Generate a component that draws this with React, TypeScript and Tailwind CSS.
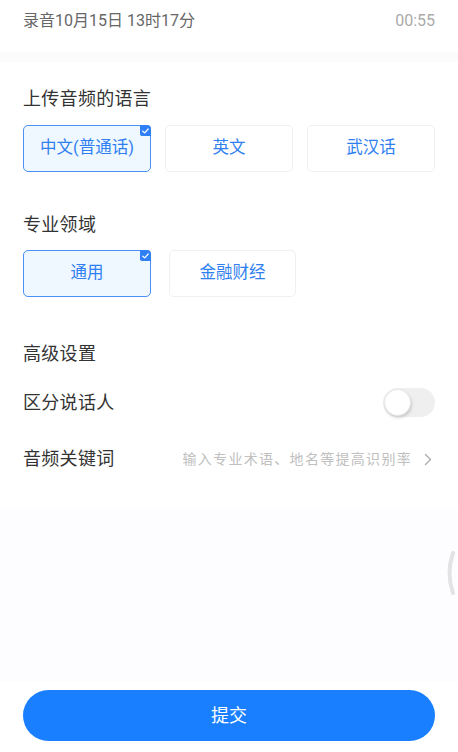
import React from "react";

const Check = () => (
  <span className="absolute -top-px -right-px flex h-[11px] w-[11px] items-center justify-center rounded-tr-[4px] rounded-bl-[2px] bg-[#2f80f6]">
    <svg width="7" height="6" viewBox="0 0 7 6" fill="none">
      <path d="M0.8 3.2 L2.7 4.9 L6.2 1" stroke="white" strokeWidth="1.2" strokeLinecap="round" strokeLinejoin="round" />
    </svg>
  </span>
);

const Chip = ({ label, selected, w }: { label: string; selected?: boolean; w: string }) => (
  <div
    className={
      "relative flex h-[47px] items-center justify-center rounded-[5px] text-[16.5px] text-[#2f7ff0] " +
      w +
      (selected ? " border-[1.5px] border-[#4a90f5] bg-[#eff7ff]" : " border border-[#f0f0f3] bg-white")
    }
  >
    {label}
    {selected && <Check />}
  </div>
);

export default function App() {
  return (
    <div
      className="relative flex h-[752px] w-[458px] flex-col overflow-hidden bg-white"
      style={{ fontFamily: 'Roboto, "Noto Sans CJK SC", sans-serif' }}
    >
      <div className="flex h-[52px] items-start justify-between px-[23px] pt-[9px]">
        <span className="text-[16px] text-[#666]">录音10月15日 13时17分</span>
        <span className="text-[16px] text-[#aaa]">00:55</span>
      </div>
      <div className="h-[10px] bg-[#fbfbfb]" />
      <div className="flex flex-col px-[23px]">
        <div className="mt-[24px] text-[18px] leading-[26px] tracking-[0.3px] text-[#333]">上传音频的语言</div>
        <div className="mt-[13px] flex gap-[14px]">
          <Chip label="中文(普通话)" selected w="w-[128px]" />
          <Chip label="英文" w="w-[128px]" />
          <Chip label="武汉话" w="w-[128px]" />
        </div>
        <div className="mt-[40px] text-[18px] leading-[26px] tracking-[0.3px] text-[#333]">专业领域</div>
        <div className="mt-[12px] flex gap-[18px]">
          <Chip label="通用" selected w="w-[128px]" />
          <Chip label="金融财经" w="w-[127px]" />
        </div>
        <div className="mt-[44px] text-[18px] leading-[26px] tracking-[0.3px] text-[#333]">高级设置</div>
        <div className="mt-[21px] flex items-center justify-between">
          <span className="text-[18px] leading-[26px] tracking-[0.3px] text-[#333]">区分说话人</span>
          <div className="relative h-[29px] w-[52px] rounded-full bg-[#efefef]">
            <div className="absolute left-[1px] top-[1px] h-[27px] w-[27px] rounded-full border border-[#e8e8e8] bg-white shadow-[1px_2px_3px_rgba(0,0,0,0.15)]" />
          </div>
        </div>
        <div className="mt-[29px] flex items-center justify-between">
          <span className="text-[18px] leading-[26px] tracking-[0.3px] text-[#333]">音频关键词</span>
          <div className="flex items-center gap-[12px] pr-[3px]">
            <span className="text-[14px] tracking-[1.3px] text-[#c0c0c0]">输入专业术语、地名等提高识别率</span>
            <svg width="8" height="13" viewBox="0 0 8 13" fill="none">
              <path d="M1.5 1.5 L6.5 6.5 L1.5 11.5" stroke="#aaa" strokeWidth="1.3" strokeLinecap="round" strokeLinejoin="round" />
            </svg>
          </div>
        </div>
      </div>
      <div className="mt-[36px] h-[174px] bg-[#fdfdff]" />
      <div className="px-[23px] pt-[8px]">
        <div className="flex h-[51px] items-center justify-center rounded-full bg-[#1a7fff] text-[18px] text-white">
          提交
        </div>
      </div>
      <svg className="absolute left-[444px] top-[550px]" width="14" height="46" viewBox="0 0 14 46" fill="none">
        <path d="M9 3 Q2 23 9 43" stroke="#e3e3e3" strokeWidth="4" strokeLinecap="round" />
      </svg>
    </div>
  );
}
